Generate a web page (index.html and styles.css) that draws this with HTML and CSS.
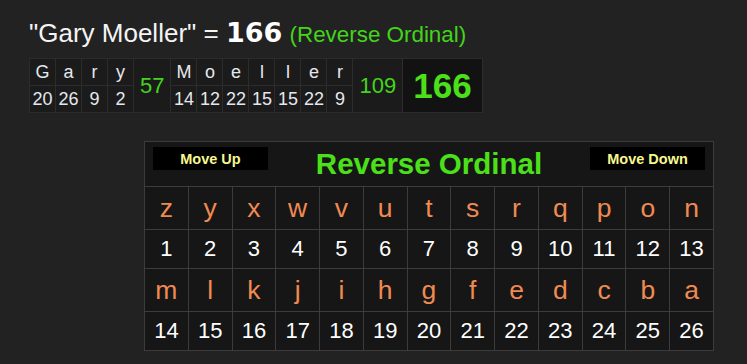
FILE: index.html
```html
<!DOCTYPE html>
<html lang="en">
<head>
<meta charset="UTF-8">
<meta name="viewport" content="width=device-width, initial-scale=1.0">
<title>Reverse Ordinal</title>
<link rel="stylesheet" href="styles.css">
</head>
<body>
    <div class="result">
        <p class="phrase">"Gary Moeller" = <span class="total">166</span> <span class="cipher">(Reverse Ordinal)</span></p>

        <table class="breakdown">
            <tr>
                <td>G</td><td>a</td><td>r</td><td>y</td>
                <td rowspan="2" class="word-sum">57</td>
                <td>M</td><td>o</td><td>e</td><td>l</td><td>l</td><td>e</td><td>r</td>
                <td rowspan="2" class="word-sum">109</td>
                <td rowspan="2" class="grand-sum">166</td>
            </tr>
            <tr>
                <td>20</td><td>26</td><td>9</td><td>2</td>
                <td>14</td><td>12</td><td>22</td><td>15</td><td>15</td><td>22</td><td>9</td>
            </tr>
        </table>
    </div>

    <table class="chart">
        <tr>
            <td colspan="13" class="chart-head">
                <div class="head-bar">
                    <button class="move">Move Up</button>
                    <span class="chart-title">Reverse Ordinal</span>
                    <button class="move">Move Down</button>
                </div>
            </td>
        </tr>
        <tr class="letters">
            <td>z</td><td>y</td><td>x</td><td>w</td><td>v</td><td>u</td><td>t</td><td>s</td><td>r</td><td>q</td><td>p</td><td>o</td><td>n</td>
        </tr>
        <tr class="values">
            <td>1</td><td>2</td><td>3</td><td>4</td><td>5</td><td>6</td><td>7</td><td>8</td><td>9</td><td>10</td><td>11</td><td>12</td><td>13</td>
        </tr>
        <tr class="letters">
            <td>m</td><td>l</td><td>k</td><td>j</td><td>i</td><td>h</td><td>g</td><td>f</td><td>e</td><td>d</td><td>c</td><td>b</td><td>a</td>
        </tr>
        <tr class="values">
            <td>14</td><td>15</td><td>16</td><td>17</td><td>18</td><td>19</td><td>20</td><td>21</td><td>22</td><td>23</td><td>24</td><td>25</td><td>26</td>
        </tr>
    </table>
</body>
</html>
```

FILE: styles.css
```css
body{
  margin: 0;
  background-color: #222222;
  font-family: "Liberation Sans", Arial, sans-serif;
  color: white;
}

.result{
  padding: 16px 0 0 29px;
}

.phrase{
  margin: 0;
  font-size: 26px;
  line-height: 34px;
  color: #f4f4f4;
}

.total{
  font-family: "DejaVu Sans", sans-serif;
  font-weight: bold;
  font-size: 27px;
  color: white;
}

.cipher{
  font-size: 22.4px;
  color: #44d41c;
}

.breakdown{
  margin-top: 6px;
  border-collapse: collapse;
  background-color: #1b1b1b;
  border: 1px solid #2c2c2c;
}

.breakdown td{
  border: 1px solid #2c2c2c;
  min-width: 25px;
  height: 26px;
  padding: 0;
  text-align: center;
  font-size: 18px;
  line-height: 20px;
  color: #e4e8ee;
}

.breakdown .word-sum{
  min-width: 0;
  font-size: 22px;
  color: #44d41c;
  padding: 0 6px;
}

.breakdown .grand-sum{
  min-width: 0;
  background-color: #121212;
  font-size: 35px;
  font-weight: bold;
  color: #4be019;
  padding: 0 10px;
}

.chart{
  margin: 28px 0 0 144px;
  width: 570px;
  table-layout: fixed;
  border-collapse: collapse;
  background-color: #161616;
  border: 1px solid #3c3c3c;
}

.chart td{
  border: 1px solid #3c3c3c;
  padding: 0;
  text-align: center;
}

.chart .chart-head{
  height: 44px;
  padding: 0 8px 0 8px;
  vertical-align: top;
}

.head-bar{
  display: flex;
  justify-content: space-between;
  align-items: flex-start;
}

.move{
  margin-top: 5px;
  width: 115px;
  height: 23px;
  border: none;
  background-color: #000;
  color: #f7f78f;
  font-family: "Liberation Sans", Arial, sans-serif;
  font-weight: bold;
  font-size: 14.5px;
  padding: 0;
}

.chart-title{
  margin-top: 4px;
  font-size: 29.5px;
  line-height: 36px;
  font-weight: bold;
  color: #4be019;
}

.letters td{
  height: 42px;
  font-size: 26.5px;
  color: #f08a52;
}

.values td{
  height: 38px;
  font-size: 22px;
  color: white;
}
```
